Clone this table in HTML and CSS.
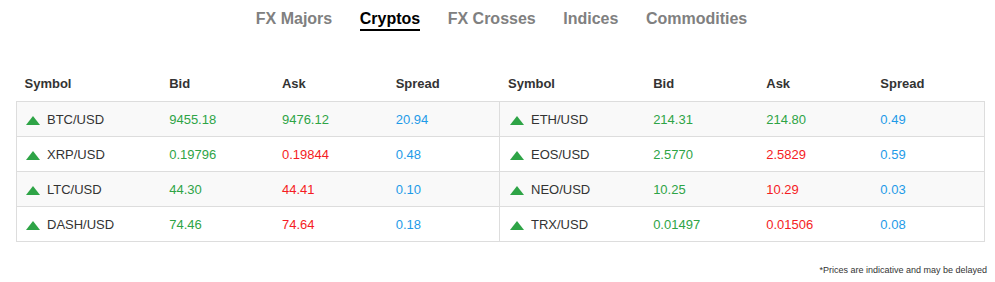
FILE: index.html
```html
<!DOCTYPE html>
<html>
<head>
<meta charset="utf-8">
<link rel="stylesheet" href="styles.css">
</head>
<body>
<nav class="tabs">
  <span class="tab">FX Majors</span>
  <span class="tab active">Cryptos</span>
  <span class="tab">FX Crosses</span>
  <span class="tab">Indices</span>
  <span class="tab">Commodities</span>
</nav>
<div class="tables">
  <table class="quotes">
    <thead><tr><th class="c1">Symbol</th><th class="c2">Bid</th><th class="c3">Ask</th><th class="c4">Spread</th></tr></thead>
    <tbody>
      <tr><td><span class="up"></span>BTC/USD</td><td class="g">9455.18</td><td class="g">9476.12</td><td class="b">20.94</td></tr>
      <tr><td><span class="up"></span>XRP/USD</td><td class="g">0.19796</td><td class="r">0.19844</td><td class="b">0.48</td></tr>
      <tr><td><span class="up"></span>LTC/USD</td><td class="g">44.30</td><td class="r">44.41</td><td class="b">0.10</td></tr>
      <tr><td><span class="up"></span>DASH/USD</td><td class="g">74.46</td><td class="r">74.64</td><td class="b">0.18</td></tr>
    </tbody>
  </table>
  <table class="quotes right">
    <thead><tr><th class="c1">Symbol</th><th class="c2">Bid</th><th class="c3">Ask</th><th class="c4">Spread</th></tr></thead>
    <tbody>
      <tr><td><span class="up"></span>ETH/USD</td><td class="g">214.31</td><td class="g">214.80</td><td class="b">0.49</td></tr>
      <tr><td><span class="up"></span>EOS/USD</td><td class="g">2.5770</td><td class="r">2.5829</td><td class="b">0.59</td></tr>
      <tr><td><span class="up"></span>NEO/USD</td><td class="g">10.25</td><td class="r">10.29</td><td class="b">0.03</td></tr>
      <tr><td><span class="up"></span>TRX/USD</td><td class="g">0.01497</td><td class="r">0.01506</td><td class="b">0.08</td></tr>
    </tbody>
  </table>
</div>
<p class="note">*Prices are indicative and may be delayed</p>
</body>
</html>
```

FILE: styles.css
```css
html, body {
  margin: 0;
  padding: 0;
  background: #fff;
  font-family: "Liberation Sans", Arial, sans-serif;
  color: #333;
}
.tabs {
  display: flex;
  justify-content: center;
  gap: 27.5px;
  padding-top: 10px;
  padding-left: 8px;
  height: 66px;
  box-sizing: border-box;
}
.tab {
  font-size: 16px;
  font-weight: bold;
  color: #808080;
  line-height: 18px;
  height: 19px;
}
.tab.active {
  color: #000;
  border-bottom: 2px solid #000;
}
.tables {
  display: flex;
  padding: 0 10px 0 16px;
}
.quotes {
  border-collapse: collapse;
  width: 484px;
  font-size: 13px;
}
.quotes.right {
  width: 485px;
}
.quotes th {
  text-align: left;
  font-weight: bold;
  height: 35px;
  padding: 0 8px;
  color: #333;
  vertical-align: middle;
}
.quotes td {
  height: 34px;
  padding: 0 8px;
  border-top: 1px solid #ddd;
  border-bottom: 1px solid #ddd;
  vertical-align: middle;
}
.quotes tbody tr td:first-child { border-left: 1px solid #ddd; padding-left: 9px; }
.quotes tbody tr td:last-child { border-right: 1px solid #ddd; }
.quotes.right tbody tr td:first-child { border-left: none; padding-left: 10px; }
.quotes tbody tr:nth-child(odd) td { background: #f9f9f9; }
.c1 { width: 129px; }
.c2 { width: 97px; }
.c3 { width: 98px; }
.c4 { width: 96px; }
.up {
  display: inline-block;
  width: 0;
  height: 0;
  border-left: 7px solid transparent;
  border-right: 7px solid transparent;
  border-bottom: 9px solid #2ea446;
  margin-right: 7px;
  vertical-align: -1px;
}
.g { color: #2ea446; }
.r { color: #f51c24; }
.b { color: #1e9be8; }
.note {
  margin: 23px 8px 0 0;
  text-align: right;
  font-size: 9px;
  color: #333;
}
```
